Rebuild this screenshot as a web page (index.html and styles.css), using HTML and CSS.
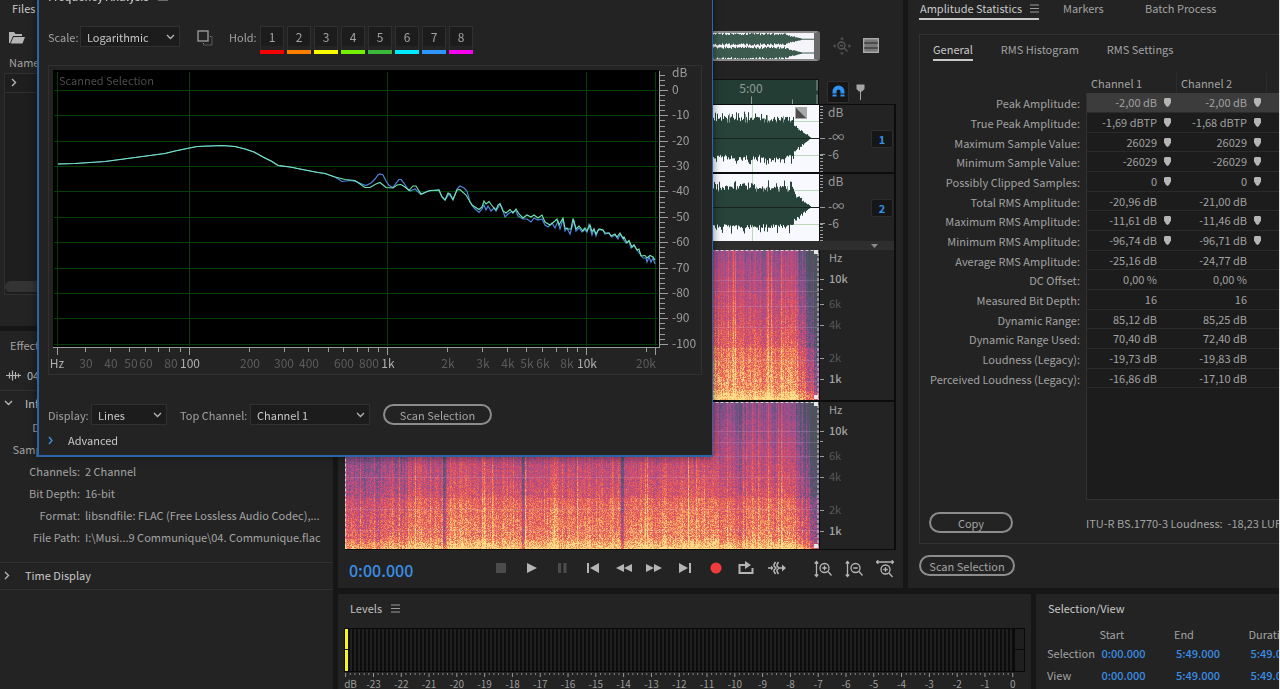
FILE: index.html
```html
<!DOCTYPE html>
<html lang="en">
<head>
<meta charset="utf-8">
<title>Audio Editor</title>
<link rel="stylesheet" href="styles.css">
</head>
<body>
<div class="app">
  <aside class="side">
    <section class="panel files">
      <h2 class="files-title">Files</h2>
      <div class="files-tools">
        <button class="icon-btn" type="button" aria-label="Open file">
          <svg width="16" height="13" viewBox="0 0 16 13"><path d="M0 12V1h5l1.500 2H13v2H4L1 12z" fill="#b5b5b5"/><path d="M4.600 6H16l-2.500 6.500H1.600z" fill="#b5b5b5"/></svg>
        </button>
      </div>
      <div class="files-head">Name</div>
      <div class="files-list">
        <div class="files-row"><svg width="6" height="9" viewBox="0 0 6 9"><path d="M1 1l3.500 3.500L1 8" fill="none" stroke="#b5b5b5" stroke-width="1.400"/></svg></div>
        <div class="files-scroll"></div>
      </div>
    </section>
    <section class="panel props">
      <h2 class="props-title">Effects</h2>
      <div class="props-file">
        <svg width="15" height="11" viewBox="0 0 15 11"><path d="M0 5.500h15M3.500 2.500v6M6.500 .5v10M9.500 2v7M12.500 3.500v4" stroke="#b5b5b5" stroke-width="1.200"/></svg>
        <span>04. Communique.flac</span>
      </div>
      <h3 class="fold"><svg width="9" height="6" viewBox="0 0 9 6"><path d="M1 1l3.500 3.500L8 1" fill="none" stroke="#b5b5b5" stroke-width="1.400"/></svg>Information</h3>
      <dl class="facts">
        <dt>Duration:</dt><dd>5:49.000</dd>
        <dt>Sample Rate:</dt><dd>44100 Hz</dd>
        <dt>Channels:</dt><dd>2 Channel</dd>
        <dt>Bit Depth:</dt><dd>16-bit</dd>
        <dt>Format:</dt><dd>libsndfile: FLAC (Free Lossless Audio Codec),...</dd>
        <dt>File Path:</dt><dd>I:\Musi...9 Communique\04. Communique.flac</dd>
      </dl>
      <h3 class="fold closed"><svg width="9" height="9" viewBox="0 0 9 9"><path d="M1 1l3.500 3.500L1 8" fill="none" stroke="#b5b5b5" stroke-width="1.400"/></svg>Time Display</h3>
    </section>
  </aside>

  <main class="main">
    <div class="upper">
      <section class="panel editor">
        <div class="overview">
          <div class="overview-wave"><canvas id="overview"></canvas></div>
          <div class="overview-tools">
            <button class="icon-btn" type="button" aria-label="Zoom to selection"><svg width="18" height="18" viewBox="0 0 18 18" fill="none" stroke="#555" stroke-width="1.400"><circle cx="8.500" cy="8.500" r="3.500"/><path d="M11 11l3.500 3.500M7 8.500h3"/><path d="M9 0l2 2.500H7zM9 18l2-2.500H7zM0 9l2.500-2v4zM18 9l-2.500-2v4z" fill="#555" stroke="none"/></svg></button>
            <button class="icon-btn" type="button" aria-label="Track list"><svg width="16" height="15" viewBox="0 0 16 15"><rect x=".7" y=".7" width="14.600" height="13.600" fill="#777" stroke="#aaa" stroke-width="1.400"/><path d="M1 5h14M1 10h14" stroke="#232323" stroke-width="1.200"/></svg></button>
          </div>
        </div>
        <div class="ruler">
          <svg class="ruler-band" height="25" viewBox="0 0 473 25" preserveAspectRatio="xMaxYMid slice"><text x="406" y="13" text-anchor="middle">5:00</text><path d="M406.500 17v8M447.500 20v5M472 0v11M472 15v10" stroke="#8e9c94"/></svg>
          <button class="snap" type="button" aria-label="Snap"><svg width="13" height="13" viewBox="0 0 13 13"><path d="M.5 11.500V6.500a6 6 0 0 1 12 0v5H8.500v-5a2 2 0 0 0-4 0v5z" fill="#3292f3"/><path d="M0 9h5M8 9h5" stroke="#151515"/></svg></button>
          <button class="icon-btn" type="button" aria-label="Add marker"><svg width="9" height="16" viewBox="0 0 9 16"><path d="M.5.5h8V5L6 7.500H3L.5 5z" fill="#a5a5a5"/><path d="M4.500 7v9" stroke="#a5a5a5"/></svg></button>
        </div>
        <div class="tracks">
          <div class="track wave">
            <div class="plot"><canvas id="wave1"></canvas><svg class="fade" width="12" height="12" viewBox="0 0 12 12"><rect width="12" height="12" fill="#a9a9a9"/><path d="M1 1v10h10z" fill="#4c4c4c"/></svg></div>
            <svg class="scale" data-kind="wave" width="42" height="67"></svg>
            <button class="chan" type="button">1</button>
          </div>
          <div class="track wave">
            <div class="plot"><canvas id="wave2"></canvas></div>
            <svg class="scale" data-kind="wave" width="42" height="67"></svg>
            <button class="chan" type="button">2</button>
          </div>
          <div class="splitter"><svg width="7" height="4" viewBox="0 0 7 4"><path d="M0 0h7L3.500 4z" fill="#8a8a8a"/></svg></div>
          <div class="track spec">
            <div class="plot"><canvas id="spec1"></canvas></div>
            <svg class="scale" data-kind="spec" width="42" height="150"></svg>
          </div>
          <div class="track spec">
            <div class="plot"><canvas id="spec2"></canvas></div>
            <svg class="scale" data-kind="spec" width="42" height="148"></svg>
          </div>
        </div>
        <div class="transport">
          <output class="clock">0:00.000</output>
          <div class="transport-keys">
            <button type="button" aria-label="Stop"><svg width="18" height="14" viewBox="0 0 18 14"><path d="M4 2h10v10H4z" fill="#4c4c4c"/></svg></button>
            <button type="button" aria-label="Play"><svg width="18" height="14" viewBox="0 0 18 14"><path d="M4 2l10 5-10 5z" fill="#b5b5b5"/></svg></button>
            <button type="button" aria-label="Pause"><svg width="18" height="14" viewBox="0 0 18 14"><path d="M5 2h3v10H5zM10.500 2h3v10h-3z" fill="#4c4c4c"/></svg></button>
            <button type="button" aria-label="Previous"><svg width="18" height="14" viewBox="0 0 18 14"><path d="M3 2h2v10H3zM15 2v10L6 7z" fill="#b5b5b5"/></svg></button>
            <button type="button" aria-label="Rewind"><svg width="18" height="14" viewBox="0 0 18 14"><path d="M9 3v8L1 7zM17 3v8L9 7z" fill="#b5b5b5"/></svg></button>
            <button type="button" aria-label="Fast forward"><svg width="18" height="14" viewBox="0 0 18 14"><path d="M1 3v8l8-4zM9 3v8l8-4z" fill="#b5b5b5"/></svg></button>
            <button type="button" aria-label="Next"><svg width="18" height="14" viewBox="0 0 18 14"><path d="M13 2h2v10h-2zM3 2v10l9-5z" fill="#b5b5b5"/></svg></button>
            <button type="button" aria-label="Record"><svg width="18" height="14" viewBox="0 0 18 14"><circle cx="9" cy="7" r="5.500" fill="#f23b3b"/></svg></button>
            <button type="button" aria-label="Loop playback"><svg width="18" height="14" viewBox="0 0 18 14"><path d="M4 4H2.500v8h13V7" fill="none" stroke="#b5b5b5" stroke-width="2"/><path d="M3 3h5V0l6 4-6 4V5H3z" fill="#b5b5b5"/></svg></button>
            <button type="button" aria-label="Skip selection"><svg width="18" height="14" viewBox="0 0 18 14" fill="none" stroke="#b5b5b5" stroke-width="1.500"><path d="M0 7h4M7.500 1L6 3.500V5l2 2-2 2v1.500L7.500 13M10.500 1L9 3.500V5l2 2-2 2v1.500l1.500 2.500M11 7h4"/><path d="M3 4.500L5.500 7 3 9.500zM14 3.500L18 7l-4 3.500z" fill="#b5b5b5" stroke="none"/></svg></button>
          </div>
          <div class="transport-zoom">
            <button type="button" aria-label="Zoom in amplitude"><svg width="18" height="18" viewBox="0 0 18 18" fill="none" stroke="#b5b5b5" stroke-width="1.300"><circle cx="10.500" cy="8" r="4.500"/><path d="M14 11.500l3.500 4M8.300 8h4.400M10.500 5.800v4.400M2.500 2v14M.8 3.500L2.500 1.500l1.700 2M.8 14.500l1.700 2 1.700-2"/></svg></button>
            <button type="button" aria-label="Zoom out amplitude"><svg width="18" height="18" viewBox="0 0 18 18" fill="none" stroke="#b5b5b5" stroke-width="1.300"><circle cx="10.500" cy="8" r="4.500"/><path d="M14 11.500l3.500 4M8.300 8h4.400M2.500 2v14M.8 3.500L2.500 1.500l1.700 2M.8 14.500l1.700 2 1.700-2"/></svg></button>
            <button type="button" aria-label="Zoom in time"><svg width="18" height="18" viewBox="0 0 18 18" fill="none" stroke="#b5b5b5" stroke-width="1.300"><circle cx="9.500" cy="9.500" r="4.500"/><path d="M13 13l3.500 4M7.300 9.500h4.400M9.500 7.300v4.400M.5 2h17M2.300.3L.5 2l1.800 1.700M15.700.3L17.500 2l-1.800 1.700"/></svg></button>
          </div>
        </div>
      </section>

      <section class="panel stats">
        <nav class="tabs">
          <a class="tab on" href="#amplitude">Amplitude Statistics<svg width="9" height="9" viewBox="0 0 9 9"><path d="M0 1h9M0 4.500h9M0 8h9" stroke="#9b9b9b"/></svg></a>
          <a class="tab tab-markers" href="#markers">Markers</a>
          <a class="tab tab-batch" href="#batch">Batch Process</a>
        </nav>
        <div class="stats-box">
          <nav class="subtabs">
            <a class="on" href="#general">General</a>
            <a href="#histogram">RMS Histogram</a>
            <a href="#settings">RMS Settings</a>
          </nav>
          <table class="grid">
            <colgroup><col class="c-label"><col class="c-ch"><col class="c-ch"><col></colgroup>
            <thead><tr><td></td><th scope="col">Channel 1</th><th scope="col">Channel 2</th><td></td></tr></thead>
            <tbody id="stats-rows"></tbody>
          </table>
          <div class="stats-foot">
            <button class="pill copy" type="button">Copy</button>
            <p>ITU-R BS.1770-3 Loudness: &nbsp;-18,23 LUFS</p>
          </div>
        </div>
        <button class="pill scan" type="button">Scan Selection</button>
      </section>
    </div>

    <div class="lower">
      <section class="panel levels">
        <h2>Levels <svg width="9" height="9" viewBox="0 0 9 9"><path d="M0 1h9M0 4.500h9M0 8h9" stroke="#9b9b9b"/></svg></h2>
        <div class="meter"><div class="meter-peak"></div><div class="meter-bars"></div><div class="meter-clip"></div></div>
        <svg id="meter-scale" class="meter-scale" viewBox="0 0 682 24"></svg>
      </section>
      <section class="panel selview">
        <h2>Selection/View</h2>
        <table class="times">
          <colgroup><col class="t-name"><col class="t-col"><col class="t-col"><col class="t-col"></colgroup>
          <thead><tr><td></td><th scope="col">Start</th><th scope="col">End</th><th scope="col">Duration</th></tr></thead>
          <tbody>
            <tr><th scope="row">Selection</th><td>0:00.000</td><td>5:49.000</td><td>5:49.000</td></tr>
            <tr><th scope="row">View</th><td>0:00.000</td><td>5:49.000</td><td>5:49.000</td></tr>
          </tbody>
        </table>
      </section>
    </div>
  </main>

  <section class="dialog" role="dialog" aria-label="Frequency Analysis">
    <h2>Frequency Analysis <svg width="10" height="9" viewBox="0 0 10 9"><path d="M0 1h10M0 4.500h10M0 8h10" stroke="#b5b5b5"/></svg></h2>
    <div class="dlg-row">
      <label for="scale">Scale:</label>
      <span class="pick pick-scale"><select id="scale"><option>Logarithmic</option><option>Linear</option></select><svg width="9" height="6" viewBox="0 0 9 6"><path d="M1 1l3.500 3.500L8 1" fill="none" stroke="#b5b5b5" stroke-width="1.300"/></svg></span>
      <button class="icon-btn copy-graph" type="button" aria-label="Copy graph"><svg width="16" height="16" viewBox="0 0 16 16" fill="none"><rect x="1" y="1" width="10" height="10" stroke="#a0a0a0" stroke-width="1.300"/><path d="M13 6.500h2v8.500H6.500V13" stroke="#8a8a8a" stroke-dasharray="1 1"/></svg></button>
      <span class="hold-label">Hold:</span>
      <div class="holds">
        <button class="hold h1" type="button">1</button>
        <button class="hold h2" type="button">2</button>
        <button class="hold h3" type="button">3</button>
        <button class="hold h4" type="button">4</button>
        <button class="hold h5" type="button">5</button>
        <button class="hold h6" type="button">6</button>
        <button class="hold h7" type="button">7</button>
        <button class="hold h8" type="button">8</button>
      </div>
    </div>
    <div class="chart-box"><svg id="chart" class="chart" viewBox="49 66 652 308"></svg></div>
    <div class="dlg-row dlg-opts">
      <label for="display">Display:</label>
      <span class="pick pick-display"><select id="display"><option>Lines</option><option>Area</option><option>Bars</option></select><svg width="9" height="6" viewBox="0 0 9 6"><path d="M1 1l3.500 3.500L8 1" fill="none" stroke="#b5b5b5" stroke-width="1.300"/></svg></span>
      <label class="top-label" for="topch">Top Channel:</label>
      <span class="pick pick-top"><select id="topch"><option>Channel 1</option><option>Channel 2</option></select><svg width="9" height="6" viewBox="0 0 9 6"><path d="M1 1l3.500 3.500L8 1" fill="none" stroke="#b5b5b5" stroke-width="1.300"/></svg></span>
      <button class="pill dlg-scan" type="button">Scan Selection</button>
    </div>
    <button class="advanced" type="button"><svg width="6" height="9" viewBox="0 0 6 9"><path d="M1 1l3 3.500L1 8" fill="none" stroke="#3a8ee6" stroke-width="1.400"/></svg>Advanced</button>
  </section>
</div>
<script src="main.js"></script>
</body>
</html>
```
FILE: styles.css
```css
* { box-sizing: border-box; }
body {
  margin: 0;
  background: #161616;
  color: #a2a2a2;
  font: 11px/16px "Noto Sans CJK SC", "Noto Sans", sans-serif;
}
h2, h3, p, dl, dd { margin: 0; font: inherit; }
button {
  margin: 0; padding: 0; border: 0; background: none;
  color: inherit; font: inherit;
}
svg { display: block; flex: none; }
svg text { font-size: 12px; }
.app {
  position: relative;
  display: flex;
  gap: 5px;
  height: 100vh;
  min-height: 600px;
  overflow: hidden;
  border-right: 1px solid #dfe4ea;
}
.panel { background: #232323; }
.icon-btn { display: flex; }

/* left column */
.side { flex: 0 0 333px; display: flex; flex-direction: column; gap: 5px; min-width: 0; }
.files { height: 326px; padding-left: 4px; display: flex; flex-direction: column; flex: none; }
.files-title { padding-left: 8px; color: #c8c8c8; }
.files-tools { height: 38px; padding: 15px 0 0 5px; }
.files-head { height: 19px; padding-left: 5px; }
.files-list {
  height: 222px; border: 1px solid #303030; background: #1e1e1e;
  display: flex; flex-direction: column; justify-content: space-between;
}
.files-row { height: 19px; border-bottom: 1px solid #303030; padding: 4px 0 0 6px; }
.files-scroll { width: 160px; height: 11px; border-radius: 6px; background: #333; margin-bottom: 2px; }
.props { flex: 1; }
.props-title { height: 29px; padding: 6px 0 0 10px; }
.props-file {
  height: 31px; display: flex; align-items: center; gap: 6px;
  padding-left: 6px; border-bottom: 1px solid #303030; color: #c0c0c0;
}
.fold { display: flex; align-items: center; gap: 12px; height: 24px; padding-left: 4px; color: #c8c8c8; }
.fold.closed { height: 28px; border: 1px solid #303030; border-width: 1px 0; padding-bottom: 2px; }
.facts {
  display: grid; grid-template-columns: 80px 1fr; column-gap: 5px;
  grid-auto-rows: 22px; margin: 1px 0 14px; line-height: 22px;
}
.facts dt { text-align: right; white-space: nowrap; }
.facts dd { white-space: nowrap; overflow: hidden; color: #a4a4a4; }

/* centre and right */
.main { flex: 1; min-width: 0; display: flex; flex-direction: column; gap: 6px; }
.upper { display: flex; gap: 5px; height: 588px; flex: none; }
.lower { display: flex; gap: 5px; flex: 1; }
.editor { flex: 1; min-width: 0; padding: 0 7px 0 7px; display: flex; flex-direction: column; }
.overview { display: flex; gap: 13px; height: 79px; padding-top: 31px; align-items: flex-start; }
.overview-wave {
  flex: 1; min-width: 0; height: 30px; border: 2px solid #8a8a8a;
  border-right: 6px solid #6a6a6a; border-radius: 3px; background: #f4f4fa;
}
canvas { display: block; width: 100%; height: 100%; }
.overview-tools { width: 63px; display: flex; gap: 12px; align-items: center; height: 29px; }
.ruler { display: flex; align-items: center; gap: 7px; height: 25px; padding-right: 31px; }
.ruler-band { flex: 1; min-width: 0; background: #243d34; border: 1px solid #111; border-width: 1px 1px 0 0; margin-right: 1px; fill: #8e9c94; }
.snap {
  width: 22px; height: 22px; background: #161616; border: 1px solid #303030;
  border-radius: 2px; display: flex; align-items: center; justify-content: center;
}
.tracks { border: 1px solid #0c0c0c; border-width: 1px 2px 1px 0; display: flex; flex-direction: column; }
.track { display: flex; align-items: center; }
.track + .track { border-top: 2px solid #0c0c0c; }
.wave { height: 67px; }
.wave + .wave { height: 69px; }
.spec { height: 150px; }
.spec + .spec { height: 149px; }
.plot { position: relative; flex: 1; min-width: 0; align-self: stretch; }
.plot canvas { position: absolute; inset: 0; }
.fade { position: absolute; right: 12px; top: 2px; }
.scale { fill: #9c9c9c; border-left: 1px solid #0c0c0c; }
.chan {
  width: 22px; height: 18px; margin: 0 1px 0 10px; background: #161616;
  border: 1px solid #2e2e2e; border-radius: 2px; color: #3292f3; font-weight: 700;
  line-height: 16px;
}
.spec .scale { margin-right: 33px; }
.spec .scale text { font-size: 11px; }
.splitter { height: 9px; background: #2e2e2e; display: flex; justify-content: flex-end; align-items: center; padding-right: 16px; }
.transport { flex: 1; display: flex; align-items: center; padding: 0 0 2px 4px; }
.clock { width: 143px; font-size: 16px; font-weight: 500; line-height: 20px; padding-top: 3px; color: #3a8ee6; }
.transport-keys { flex: 0 1 294px; display: flex; justify-content: space-between; }
.transport-zoom { display: flex; gap: 13px; margin-left: 28px; padding-top: 2px; }
.stats { flex: 0 0 371px; min-width: 0; padding-left: 11px; overflow: hidden; }
a { color: inherit; text-decoration: none; white-space: nowrap; }
.tabs { display: flex; height: 34px; align-items: flex-start; }
.tab { height: 20px; line-height: 17px; }
.tab.on { display: flex; align-items: center; justify-content: space-between; width: 120px; height: 20px; padding: 0 0 1px 1px; border-bottom: 2px solid #c8c8c8; color: #c8c8c8; }
.tab-markers { width: 82px; margin-left: 24px; }
.stats-box { border: 1px solid #323232; border-right: 0; height: 510px; display: flex; flex-direction: column; }
.subtabs { display: flex; gap: 28px; padding: 6px 0 0 13px; height: 38px; flex: none; }
.subtabs a { height: 20px; }
.subtabs .on { border-bottom: 2px solid #c8c8c8; color: #c8c8c8; }
.grid { border-collapse: separate; border-spacing: 0; table-layout: fixed; width: 100%; flex: none; }
.c-label { width: 167px; }
.c-ch { width: 90px; }
.grid td, .grid th { padding: 0; font-weight: 400; white-space: nowrap; }
.grid thead th { height: 20px; text-align: left; padding-left: 4px; border-right: 1px solid #2c2c2c; }
.grid tbody th { text-align: right; padding-right: 6px; border-right: 1px solid #323232; }
.grid tbody td { background: #1c1c1c; border-bottom: 1px solid #2b2b2b; }
.grid tbody tr { line-height: 18px; }
.grid tbody tr:nth-child(3n+1) { line-height: 19px; }
.grid tbody tr:nth-child(3n+2) { line-height: 19px; }
.grid tbody tr.picked td { background: #3c3c3c; }
.grid tbody tr.rest td { height: 112px; border-bottom-color: #323232; }
.cell { display: flex; justify-content: flex-end; align-items: center; gap: 7px; padding-right: 6px; }
.stats-foot { display: flex; align-items: center; gap: 73px; padding: 12px 0 0 9px; white-space: nowrap; }
.pill { height: 21px; border: 2px solid #8c8c8c; border-radius: 11px; line-height: 16px; color: #a4a4a4; }
.copy { width: 84px; flex: none; }
.scan { width: 96px; margin-top: 11px; }
.levels { flex: 1; min-width: 0; padding: 6px 6px 0 6px; }
.levels h2 { display: flex; align-items: center; gap: 9px; padding-left: 6px; color: #c0c0c0; }
.meter { display: flex; height: 44px; margin-top: 12px; border: 1px solid #0a0a0a; background: #1b1b1b; }
.meter-peak { width: 3px; background: linear-gradient(#f7f71c 0 20px, #222 20px 21px, #f7f71c 21px); }
.meter-bars { flex: 1; background: repeating-linear-gradient(90deg, #0c0c0c 0 2px, #202020 2px 4px); }
.meter-clip { width: 10px; border-left: 1px solid #0a0a0a; background: linear-gradient(#1f1f1f 0 20px, #0a0a0a 20px 21px, #1f1f1f 21px); }
.meter-scale { width: 100%; fill: #9c9c9c; }
.meter-scale text { font-size: 10px; }
.selview { flex: 0 0 243px; min-width: 0; overflow: hidden; padding: 6px 0 0 11px; }
.selview h2 { padding-left: 1px; color: #c8c8c8; }
.times { border-collapse: collapse; table-layout: fixed; width: 276px; margin-top: 9px; }
.times th, .times td { padding: 0; text-align: left; font-weight: 400; height: 22px; }
.times thead th, .times thead td { height: 17px; }
.t-name { width: 52px; }
.t-col { width: 74px; }
.times tbody td { color: #3a8ee6; padding-left: 2px; font-weight: 500; }

/* floating window */
.dialog {
  position: absolute; left: 37px; top: -14px; width: 676px;
  border: 2px solid #2b67a8; border-right-width: 1px; background: #232323; padding: 0 11px 7px 9px;
  box-shadow: 0 0 8px rgba(0, 0, 0, .5);
}
.dialog h2 { display: flex; align-items: center; gap: 9px; margin: 0 0 22px; color: #c0c0c0; font-weight: 500; }
.dlg-row { display: flex; align-items: flex-start; height: 28px; margin-bottom: 11px; line-height: 22px; }
.dlg-row label:first-child { width: 32px; }
.pick { position: relative; display: block; height: 21px; }
.pick select {
  appearance: none; width: 100%; height: 21px; margin: 0; padding: 0 18px 0 6px;
  background: #1c1c1c; border: 1px solid #303030; border-radius: 0;
  color: #c8c8c8; font: inherit; line-height: 18px; display: block;
}
.pick svg { position: absolute; right: 5px; top: 8px; pointer-events: none; }
.pick-scale { width: 100px; }
.copy-graph { margin: 4px 16px 0 17px; }
.hold-label { width: 31px; }
.holds { display: flex; gap: 3px; }
.hold {
  width: 24px; height: 28px; line-height: 20px; padding-bottom: 2px; font-size: 12px;
  background: linear-gradient(#1c1c1c, #1c1c1c) top / 100% 20px no-repeat;
  box-shadow: inset 0 1px #303030, inset 1px 0 #303030, inset -1px 0 #303030;
  border-bottom: 4px solid;
}
.h1 { border-color: #f80000; } .h2 { border-color: #ff7f00; }
.h3 { border-color: #fafa00; } .h4 { border-color: #74f000; }
.h5 { border-color: #3ab83a; } .h6 { border-color: #00eaff; }
.h7 { border-color: #2f95ff; } .h8 { border-color: #f800f0; }
.chart-box { border: 1px solid #303030; width: 654px; }
.chart { width: 100%; }
.chart .caption { font-size: 11px; }
.dlg-opts { margin: 29px 0 7px; height: 21px; }
.dlg-row.dlg-opts label:first-child { width: 43px; }
.pick-display { width: 76px; }
.top-label { width: 70px; margin-left: 13px; white-space: nowrap; }
.pick-top { width: 120px; }
.dlg-scan { width: 109px; margin-left: 13px; }
.advanced { display: flex; align-items: center; gap: 14px; color: #c8c8c8; }
```
FILE: main.js
```javascript
// Repeatable pseudo-random numbers so the drawings are stable between loads.
function seeded(seed) {
  let s = seed;
  return () => {
    s = (s * 1664525 + 1013904223) >>> 0;
    return s / 4294967296;
  };
}

function prepare(id) {
  const canvas = document.getElementById(id);
  canvas.width = canvas.clientWidth;
  canvas.height = canvas.clientHeight;
  return [canvas.getContext('2d'), canvas.width, canvas.height];
}

function drawWave(id, seed) {
  const [g, w, h] = prepare(id);
  const rnd = seeded(seed);
  const mid = Math.floor(h / 2);
  g.fillStyle = '#f8f8ff';
  g.fillRect(0, 0, w, h);
  g.fillStyle = '#bcd8bc';
  g.fillRect(0, Math.round(mid - h * 0.25), w, 1);
  g.fillRect(0, Math.round(mid + h * 0.25), w, 1);
  g.fillRect(w - 67, 0, 1, h);
  for (let x = 0; x < w - 8; x++) {
    const left = w - 8 - x;
    const fade = left < 18 ? left / 18 * 0.68 : 1;
    const top = (rnd() < 0.35 ? 0.6 + rnd() * 0.2 : 0.5 + rnd() * 0.14) * fade;
    const bottom = (rnd() < 0.35 ? 0.6 + rnd() * 0.2 : 0.5 + rnd() * 0.14) * fade;
    g.fillStyle = rnd() < 0.12 ? '#8a9a92' : '#27433a';
    g.fillRect(x, mid - top * h / 2, 1, top * h / 2);
    g.fillStyle = '#27433a';
    g.fillRect(x, mid - 0.46 * h / 2 * fade, 1, 0.46 * h / 2 * fade);
    g.fillRect(x, mid, 1, bottom * h / 2);
  }
  g.fillStyle = '#16241e';
  g.fillRect(0, mid, w, 1);
}

function drawOverview() {
  const [g, w, h] = prepare('overview');
  const rnd = seeded(5);
  g.fillStyle = '#f4f4fa';
  g.fillRect(0, 0, w, h);
  g.fillStyle = '#3d5a4e';
  for (const mid of [h * 0.24, h * 0.77]) {
    for (let x = 0; x < w; x++) {
      const left = w - 12 - x;
      const fade = left < 0 ? 0 : left < 16 ? left / 20 : 1;
      const a = (3.500 + rnd() * 2.500) * fade + 0.5;
      g.fillRect(x, mid - a, 1, a * 2);
    }
  }
}

const RAMP = [[78, 82, 92], [98, 84, 128], [160, 78, 142], [212, 76, 106], [236, 108, 84], [246, 166, 100], [254, 224, 140]];
function heat(v) {
  const t = Math.max(0, Math.min(0.999, v)) * (RAMP.length - 1);
  const i = Math.floor(t);
  const f = t - i;
  return RAMP[i].map((c, k) => c + (RAMP[i + 1][k] - c) * f);
}

function drawSpectrogram(id, seed, bias) {
  const [g, w, h] = prepare(id);
  const rnd = seeded(seed);
  const img = g.createImageData(w, h);
  const quiet = [99, 178, 277];
  const columns = [];
  let slow = 0;
  for (let x = 0; x < w; x++) {
    slow = slow * 0.92 + (rnd() - 0.5) * 0.045;
    let c = slow + (rnd() - 0.5) * 0.15 + (rnd() < 0.1 ? 0.16 : 0);
    for (const q of quiet) if (Math.abs(x - q) < 2) c -= 0.28;
    if (x === 343) c += 0.3;
    if (x < 60) c -= 0.1;
    columns.push(c);
  }
  for (let y = 0; y < h; y++) {
    const t = y / h;
    const row = (rnd() - 0.5) * 0.03;
    const low = t > 0.92 ? (t - 0.92) * 3 : 0;
    const band = t > 0.65 ? 0.08 : 0;
    for (let x = 0; x < w; x++) {
      const left = w - x;
      const edge = left < 24 ? (24 - left) / 24 * 0.4 + 0.12 : 0;
      const grain = (rnd() - 0.5) * (0.12 + t * 0.3);
      const v = bias + 0.22 + t * 0.42 + low + band + row + columns[x] + grain - edge;
      const [r, gg, b] = heat(v);
      const i = (y * w + x) * 4;
      img.data[i] = r;
      img.data[i + 1] = gg;
      img.data[i + 2] = b;
      img.data[i + 3] = 255;
    }
  }
  g.putImageData(img, 0, 0);
  g.fillStyle = 'rgba(215,200,240,.18)';
  for (const t of [0.2, 0.27, 0.37, 0.51, 0.73, 0.87]) g.fillRect(0, Math.round(h * t), w, 1);
  g.strokeStyle = '#d5d5d5';
  g.setLineDash([3, 2]);
  g.strokeRect(0.5, 0.5, w - 1.500, h);
  g.fillStyle = '#e8e8e8';
  g.fillRect(w - 5, 0, 4, 4);
  g.fillRect(w - 5, h - 5, 4, 4);
}

function drawScales() {
  for (const svg of document.querySelectorAll('.scale')) {
    let out = '';
    if (svg.dataset.kind === 'wave') {
      for (const y of [1, 4, 7, 10, 13, 17, 50, 53, 56, 60, 63, 66]) out += `<path d="M0 ${y}.5h3" stroke="#9c9c9c"/>`;
      out += '<path d="M0 33.500h5M0 49.500h5" stroke="#9c9c9c"/>';
      out += '<text x="8" y="12">dB</text><text x="8" y="37">-∞</text><text x="8" y="54">-6</text>';
    } else {
      const labels = [['Hz', 8, 0], ['10k', 29, 2], ['6k', 54, 1], ['4k', 75, 1], ['2k', 108, 1], ['1k', 129, 2]];
      for (const [name, y, kind] of labels) {
        out += `<text x="9" y="${y + 4}" fill="${kind === 1 ? '#585858' : '#a4a4a4'}" font-weight="${kind === 2 ? 500 : 400}">${name}</text>`;
        if (kind) out += `<path d="M0 ${y}.5h4" stroke="#9c9c9c"/>`;
      }
      out += '<path d="M0 39.500h3" stroke="#9c9c9c"/>';
    }
    svg.innerHTML = out;
  }
}

function drawMeterScale() {
  let out = '<path d="M1.500 1v4" stroke="#9c9c9c"/><text x="0" y="16">dB</text>';
  const step = 27.85;
  for (let i = 0; i <= 24; i++) {
    const x = 1.500 + i * step;
    if (i) out += `<path d="M${x} 1v4" stroke="#9c9c9c"/><text x="${x}" y="16" text-anchor="middle">${i - 24}</text>`;
    if (i < 24) for (let k = 1; k < 6; k++) out += `<path d="M${x + k * step / 6} 1v2" stroke="#8a8a8a"/>`;
  }
  document.getElementById('meter-scale').innerHTML = out;
}

function drawChart() {
  const fx = f => 387.500 + 198.800 * (Math.log10(f) - 3);
  let out = '<rect x="53" y="70" width="606" height="277" fill="#000"/><g stroke="#063f06">';
  for (let i = 0; i <= 10; i++) out += `<path d="M54 ${Math.round(90 + i * 25.370)}.5H658"/>`;
  for (const x of [57, 189, 387, 586, 655]) out += `<path d="M${x}.5 72V346"/>`;
  out += '</g><g stroke="#9c9c9c"><path d="M659.500 71V347.500M53 347.500H660"/>';
  for (let i = -3; i <= 50; i++) out += `<path d="M660 ${Math.round(90 + i * 5.074)}.5h${i % 5 ? 5 : 8}"/>`;
  for (const f of [30, 40, 50, 60, 70, 80, 90, 200, 300, 400, 500, 600, 700, 800, 900, 2e3, 3e3, 4e3, 5e3, 6e3, 7e3, 8e3, 9e3, 2e4]) out += `<path d="M${Math.round(fx(f))}.5 348v4"/>`;
  for (const x of [57, 189, 387, 586, 655]) out += `<path d="M${x}.5 348v7"/>`;
  out += '</g><g fill="#9c9c9c"><text x="672" y="77">dB</text>';
  for (let i = 0; i <= 10; i++) out += `<text x="672" y="${Math.round(94 + i * 25.370)}">${i ? -10 * i : 0}</text>`;
  out += '</g><text class="caption" x="59" y="85" fill="#4c4c4c">Scanned Selection</text><g text-anchor="middle">';
  for (const [n, x] of [['Hz', 57], ['100', 190], ['1k', 388], ['10k', 587]]) out += `<text x="${x}" y="368" fill="#b0b0b0">${n}</text>`;
  for (const [n, x] of [['30', 86], ['40', 111], ['50', 131], ['60', 146], ['80', 171], ['200', 250], ['300', 284], ['400', 309], ['600', 344], ['800', 369], ['2k', 448], ['3k', 483], ['4k', 508], ['5k', 527], ['6k', 543], ['8k', 567], ['20k', 646]]) out += `<text x="${x}" y="368" fill="#5c5c5c">${n}</text>`;
  out += '</g>';
  const start = '58,164 75,163.500 90,162.500 105,161.500 120,159.500 135,157.500 150,155.500 165,153.500 175,151 187,148.500 197,146.500 210,146 222,145.500 235,146.500 245,149 254,152 263,157 272,161.500 278,165.500 290,167 305,170 318,172.500 325,173.500 335,177 ';
  const blue = start + '342,181.500 350,180.500 356,181.500 362,184 366,185.500 371,183 375,179 378,175 380,174 383,175 386,181 389,185.500 393,187.500 396,183 399,179.500 401,179.500 404,183 407,188 410,191 415,189 421,194.500 428,191 434,190.500 439,190 442,197 445,200 449,194 453,200 457,189 460,186 464,188 467,191 470,202 474,208 479,212.500 482,209 484,205 486,210 488,206 491,211 494,208 496,211 500,204 502,208 505,217 508,214 511,212 516,211 518,216 523,219 527,219 531,222 534,218 538,220 542,219 545,225 548,227 552,223 555,228 558,221 560,229 563,219 565,231 567,228 570,234 574,220 576,231 579,228 582,232 584,229 587,232 589,224.500 592,235 594,229 596,236 598,230 603,230 605,234 609,233 612,237 615,235 618,239 620,234 623,239 626,243 629,241 631,248 634,245 637,250 640,254 643,258 646,258 647,262 649,257 651,262 653,258 655,264';
  const green = start + '345,179.500 355,180.500 360,184 365,187.500 370,187.500 376,184 380,182.500 386,187.500 393,188 397,185 401,184.500 405,187 409,190.500 413,186 416,186 421,194 430,190.500 439,190 442,197 445,200 448,193 450,194 453,199.500 457,190 460,189.500 466,195 472,205 479,209.500 482,207 484,201 486,204 489,201.500 493,207 496,210 498,205 500,203.500 503,211 506,213 510,209.500 513,213 516,209 519,214 523,218 527,215 531,217 534,215 538,218 542,215 545,222 550,225 555,221 557,219 559,225 563,218 565,228 568,229 571,229 573,218.500 576,229 579,226 583,231 585,228 587,231 590,225 592,231.500 594,229 596,234 599,229 603,230 605,233 609,233 611,236 615,234 617,237 620,233 623,238 624,237 627,243 629,240.500 632,247 634,245 637,250 639,249 641,256 645,255.500 647,258 650,255.500 653,257 655,260';
  out += `<polyline points="${blue}" fill="none" stroke="#4e84dc" stroke-width="1.200"/>`;
  out += `<polyline points="${green}" fill="none" stroke="#74e6b4" stroke-width="1.100"/>`;
  document.getElementById('chart').innerHTML = out;
}

function fillStats() {
  const rows = [
    ['Peak Amplitude', '-2,00 dB', '-2,00 dB', 1], ['True Peak Amplitude', '-1,69 dBTP', '-1,68 dBTP', 1],
    ['Maximum Sample Value', '26029', '26029', 1], ['Minimum Sample Value', '-26029', '-26029', 1],
    ['Possibly Clipped Samples', '0', '0', 1], ['Total RMS Amplitude', '-20,96 dB', '-21,00 dB', 0],
    ['Maximum RMS Amplitude', '-11,61 dB', '-11,46 dB', 1], ['Minimum RMS Amplitude', '-96,74 dB', '-96,71 dB', 1],
    ['Average RMS Amplitude', '-25,16 dB', '-24,77 dB', 0], ['DC Offset', '0,00 %', '0,00 %', 0],
    ['Measured Bit Depth', '16', '16', 0], ['Dynamic Range', '85,12 dB', '85,25 dB', 0],
    ['Dynamic Range Used', '70,40 dB', '72,40 dB', 0], ['Loudness (Legacy)', '-19,73 dB', '-19,83 dB', 0],
    ['Perceived Loudness (Legacy)', '-16,86 dB', '-17,10 dB', 0]
  ];
  const cell = (v, pin) => `<td><div class="cell">${v}<svg width="7" height="9" viewBox="0 0 7 9">${pin ? '<path d="M1 0h5l1 1v3.500L5 8 3.500 9 2 8 0 4.500V1z" fill="#b5b5b5"/>' : ''}</svg></div></td>`;
  document.getElementById('stats-rows').innerHTML = rows.map((r, i) =>
    `<tr${i ? '' : ' class="picked"'}><th scope="row">${r[0]}:</th>${cell(r[1], r[3])}${cell(r[2], r[3])}<td></td></tr>`
  ).join('') + '<tr class="rest"><th></th><td colspan="3"></td></tr>';
}

fillStats();
drawScales();
drawMeterScale();
drawChart();
drawOverview();
drawWave('wave1', 11);
drawWave('wave2', 29);
drawSpectrogram('spec1', 3, 0.1);
drawSpectrogram('spec2', 17, 0.04);
```
